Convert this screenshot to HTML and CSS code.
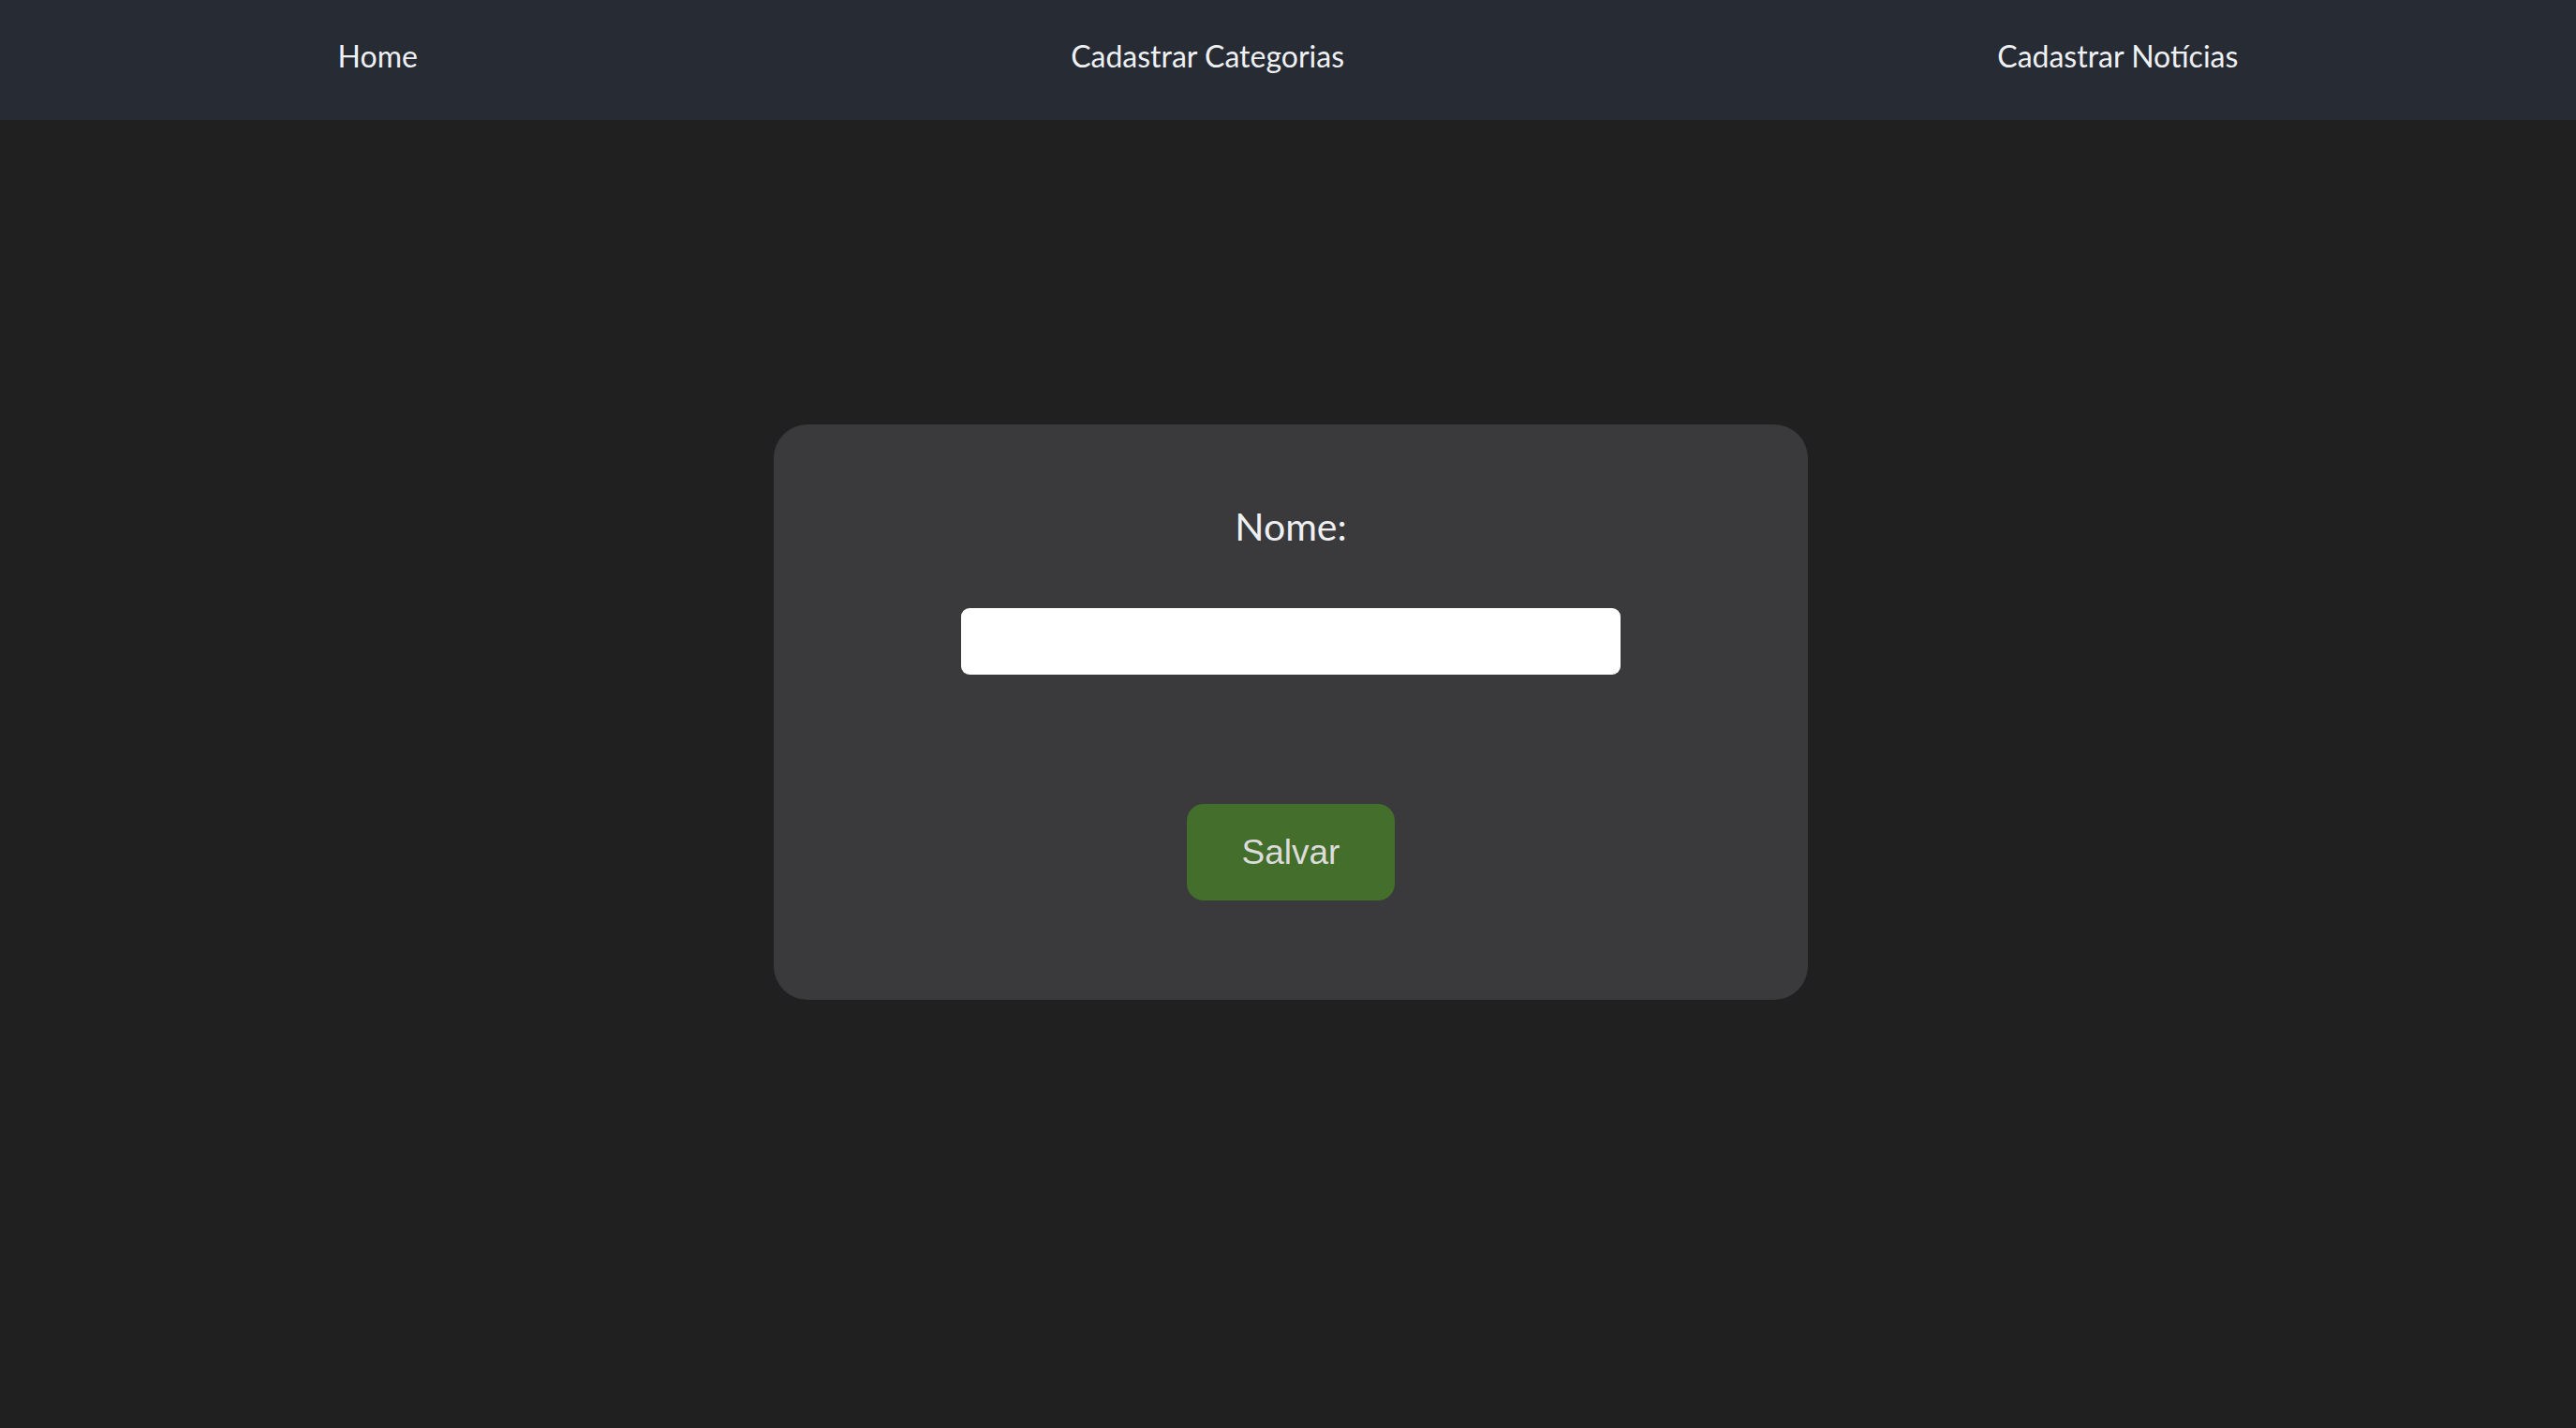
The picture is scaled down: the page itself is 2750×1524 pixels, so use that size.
FILE: index.html
```html
<!DOCTYPE html>
<html lang="pt-BR">
<head>
<meta charset="utf-8">
<title>Cadastrar Categorias</title>
<link rel="stylesheet" href="styles.css">
</head>
<body>
<nav class="topnav">
  <a class="navlink" href="#">Home</a>
  <a class="navlink" href="#">Cadastrar Categorias</a>
  <a class="navlink" href="#">Cadastrar Notícias</a>
</nav>
<main class="page">
  <form class="card">
    <label class="field-label" for="nome">Nome:</label>
    <input class="field-input" id="nome" type="text">
    <button class="save-btn" type="button">Salvar</button>
  </form>
</main>
</body>
</html>
```
FILE: styles.css
```css
html, body {
  margin: 0;
  padding: 0;
}
body {
  background: #202020;
  min-height: 100vh;
  font-family: Lato, "Open Sans", sans-serif;
  color: #eef0f3;
}
.topnav {
  box-sizing: border-box;
  height: 128px;
  background: #272b34;
  display: flex;
  justify-content: space-around;
  align-items: flex-start;
  padding: 41px 12px 0;
}
.navlink {
  color: #eef0f3;
  text-decoration: none;
  font-size: 32px;
  line-height: 38px;
}
.page {
  display: flex;
  justify-content: center;
  padding: 325px 0 0 6px;
}
.card {
  box-sizing: border-box;
  width: 1104px;
  background: #3a3a3c;
  border-radius: 36px;
  padding: 84px 0 106px;
  display: flex;
  flex-direction: column;
  align-items: center;
}
.field-label {
  font-size: 41px;
  line-height: 49px;
  color: #eef0f3;
}
.field-input {
  box-sizing: border-box;
  margin-top: 63px;
  width: 704px;
  height: 71px;
  border: none;
  border-radius: 9px;
  background: #ffffff;
  outline: none;
  padding: 0 16px;
  font-size: 30px;
}
.save-btn {
  margin-top: 138px;
  width: 222px;
  height: 103px;
  border: none;
  border-radius: 18px;
  background: #446e2b;
  color: #dcdcdc;
  font-family: "Liberation Sans", Arial, sans-serif;
  font-size: 37px;
  display: flex;
  align-items: center;
  justify-content: center;
  padding: 0;
}
```
